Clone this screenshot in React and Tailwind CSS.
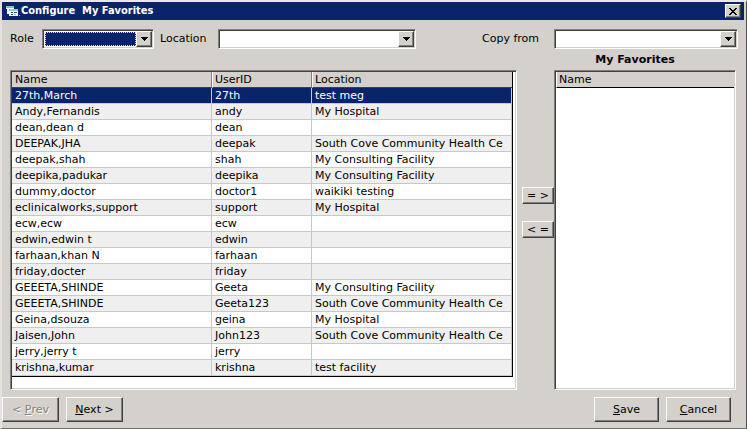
import React from "react";

const users = [
  ["27th,March", "27th", "test meg"],
  ["Andy,Fernandis", "andy", "My Hospital"],
  ["dean,dean d", "dean", ""],
  ["DEEPAK,JHA", "deepak", "South Cove Community Health Ce"],
  ["deepak,shah", "shah", "My Consulting Facility"],
  ["deepika,padukar", "deepika", "My Consulting Facility"],
  ["dummy,doctor", "doctor1", "waikiki testing"],
  ["eclinicalworks,support", "support", "My Hospital"],
  ["ecw,ecw", "ecw", ""],
  ["edwin,edwin t", "edwin", ""],
  ["farhaan,khan N", "farhaan", ""],
  ["friday,docter", "friday", ""],
  ["GEEETA,SHINDE", "Geeta", "My Consulting Facility"],
  ["GEEETA,SHINDE", "Geeta123", "South Cove Community Health Ce"],
  ["Geina,dsouza", "geina", "My Hospital"],
  ["Jaisen,John", "John123", "South Cove Community Health Ce"],
  ["jerry,jerry t", "jerry", ""],
  ["krishna,kumar", "krishna", "test facility"],
];

const sunken =
  "border border-t-[#808080] border-l-[#808080] border-r-white border-b-white shadow-[inset_1px_1px_0_#404040,inset_-1px_-1px_0_#d4d0c8]";
const raised =
  "border border-t-white border-l-white border-r-[#404040] border-b-[#404040] bg-[#d4d0cb] shadow-[inset_-1px_-1px_0_#808080]";

function Combo({ id, className, selected }) {
  return (
    <div className={`relative h-5 bg-white p-[2px] ${sunken} ${className}`}>
      <select
        id={id}
        className={`block h-full w-full appearance-none outline-none ${selected ? "bg-[#0a246a] text-white" : "bg-transparent"}`}
      >
        <option></option>
      </select>
      {selected && (
        <span className="pointer-events-none absolute inset-y-[2px] left-[2px] right-[17px] border border-dotted border-[#e8dc98]" />
      )}
      <span
        className={`pointer-events-none absolute inset-y-px right-px flex w-4 items-center justify-center ${raised}`}
      >
        <svg width="7" height="4" viewBox="0 0 7 4" shapeRendering="crispEdges">
          <path d="M0 0h7v1H0zM1 1h5v1H1zM2 2h3v1H2zM3 3h1v1H3z" fill="#000" />
        </svg>
      </span>
    </div>
  );
}

function Button({ children, className, disabled }) {
  return (
    <button
      type="button"
      disabled={disabled}
      className={`flex items-center justify-center whitespace-pre ${raised} ${
        disabled ? "text-[#808080] [text-shadow:1px_1px_0_#fff]" : ""
      } ${className}`}
    >
      {children}
    </button>
  );
}

function FormIcon() {
  return (
    <svg width="14" height="14" viewBox="0 0 14 14" shapeRendering="crispEdges" aria-hidden="true">
      <path d="M0 2h8v2H0z" fill="#7cc3cd" />
      <path d="M0 4h8v1H0zM1 5h2v4H1zM1 9h3v1H1z" fill="#fff" />
      <path d="M3 5h9v2H3z" fill="#8fd0d8" />
      <path d="M3 7h9v5H3z" fill="#fff" />
      <path d="M5 8h2v1H5zM8 8h3v1H8zM5 10h2v1H5z" fill="#33508c" />
      <path d="M8 10h2v1H8z" fill="#7cc3cd" />
      <path d="M13 11h1v1h-1z" fill="#9fc4cc" />
    </svg>
  );
}

export default function App() {
  return (
    <div className="flex min-h-screen flex-col border-t-2 border-r border-b border-l-2 border-t-[#eceae6] border-r-[#505050] border-b-[#707070] border-l-[#e4e2de] bg-[#d4d0cb] pr-px font-['DejaVu_Sans',Verdana,sans-serif] text-[11px] leading-4 text-black">
      <header className="mr-px flex h-[18px] items-center bg-[#0a246a] pr-[3px] pl-1 text-white">
        <FormIcon />
        <h1 className="ml-px flex-1 whitespace-pre font-['DejaVu_Sans_Condensed','DejaVu_Sans',sans-serif] font-bold">
          Configure  My Favorites
        </h1>
        <button
          type="button"
          aria-label="Close"
          className={`flex h-[14px] w-4 items-center justify-center ${raised}`}
        >
          <svg width="8" height="7" viewBox="0 0 8 7" shapeRendering="crispEdges">
            <path
              d="M0 0h2v1H0zM6 0h2v1H6zM1 1h2v1H1zM5 1h2v1H5zM2 2h4v1H2zM3 3h2v1H3zM2 4h4v1H2zM1 5h2v1H1zM5 5h2v1H5zM0 6h2v1H0zM6 6h2v1H6z"
              fill="#000"
            />
          </svg>
        </button>
      </header>

      <section className="flex items-center pt-[9px] pr-[7px] pl-2">
        <label htmlFor="role" className="w-8">Role</label>
        <Combo id="role" className="w-28" selected />
        <label htmlFor="location" className="ml-[6px] w-[58px]">Location</label>
        <Combo id="location" className="w-[198px]" />
        <label htmlFor="copy" className="ml-auto w-[72px]">Copy from</label>
        <Combo id="copy" className="w-[184px]" />
      </section>

      <main className="flex flex-1 pr-[9px] pl-2">
        <div className={`mt-[21px] min-w-0 flex-1 bg-white p-px pr-[3px] ${sunken}`}>
          <table className="w-full table-fixed border-separate border-spacing-0 border-r border-b border-black text-left">
            <thead>
              <tr className="bg-[#d4d0cb]">
                <th className="h-4 w-[200px] border-r border-b border-r-[#808080] border-b-[#404040] p-0 pl-[3px] leading-[15px] font-normal">Name</th>
                <th className="w-[100px] border-r border-b border-l border-r-[#808080] border-b-[#404040] border-l-white p-0 pl-[2px] leading-[15px] font-normal">UserID</th>
                <th className="border-b border-l border-b-[#404040] border-l-white p-0 pl-[2px] leading-[15px] font-normal">Location</th>
              </tr>
            </thead>
            <tbody>
              {users.map((user, row) => (
                <tr
                  key={row}
                  className={row === 0 ? "bg-[#0a246a] text-white" : row % 2 ? "bg-[#efefef]" : "bg-white"}
                >
                  {user.map((value, column) => (
                    <td
                      key={column}
                      className="h-4 overflow-hidden border-r border-b border-[#c8c8c8] p-0 pl-[3px] leading-[15px] whitespace-nowrap"
                    >
                      {value}
                    </td>
                  ))}
                </tr>
              ))}
            </tbody>
          </table>
        </div>

        <div className="flex w-[37px] flex-col items-end gap-[17px] pt-[138px]">
          <Button className="h-[17px] w-8">= &gt;</Button>
          <Button className="h-[17px] w-8">&lt; =</Button>
        </div>

        <div className="flex w-[182px] flex-col">
          <h2 className="h-[21px] pt-[3px] pr-5 text-center font-bold">My Favorites</h2>
          <div className={`flex-1 bg-white p-px ${sunken}`}>
            <table className="w-full border-separate border-spacing-0 text-left">
              <thead>
                <tr>
                  <th className="h-4 border-b border-l border-b-black border-l-white bg-[#d4d0cb] p-0 pl-[2px] leading-[15px] font-normal">Name</th>
                </tr>
              </thead>
            </table>
          </div>
        </div>
      </main>

      <footer className="flex gap-[7px] pt-[7px] pb-[6px] pr-[14px]">
        <Button className="h-[25px] w-[57px]" disabled>&lt; <u>P</u>rev</Button>
        <Button className="h-[25px] w-[57px]"><u>N</u>ext &gt;</Button>
        <Button className="ml-auto h-[25px] w-[65px]"><u>S</u>ave</Button>
        <Button className="h-[25px] w-[65px]"><u>C</u>ancel</Button>
      </footer>
    </div>
  );
}
